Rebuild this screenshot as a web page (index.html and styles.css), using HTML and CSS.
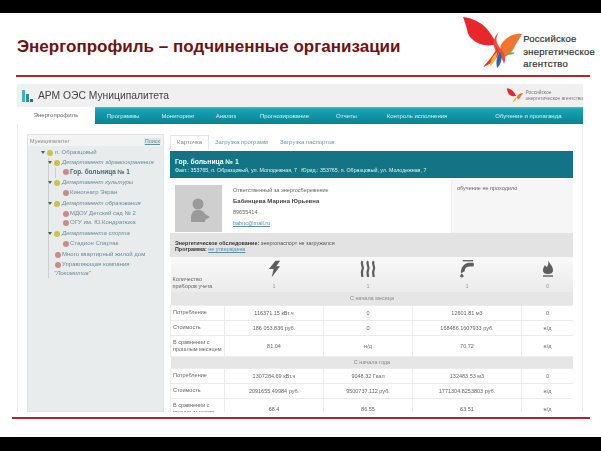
FILE: index.html
```html
<!DOCTYPE html>
<html lang="ru">
<head>
<meta charset="utf-8">
<title>Энергопрофиль</title>
<link rel="stylesheet" href="styles.css">
</head>
<body>
<div class="bar-top"></div>
<main class="slide">
  <header class="slide-head">
    <h1 class="slide-title">Энергопрофиль – подчиненные организации</h1>
    <div class="brand">
      <svg class="brand-mark" viewBox="0 0 60 54" width="60" height="54">
        <path d="M0 1C9 2 18 6 24 13C28 18 31 23 34 28C26 31 15 29 9 23C3 17 5 14 3 10C2 6 1 4 0 1Z" fill="#e8262c"/>
        <path d="M59 18C51 17 45 20 39 27C36 31 37 37 41 41C45 40 50 35 52 30C54 26 57 22 59 18Z" fill="#f0752e"/>
        <path d="M36 16C30 21 29 29 33 35C36 39 40 43 41 48C44 41 41 36 37 32C33 27 32 21 36 16Z" fill="#e94e3b"/>
        <path d="M34 31C32 38 26 44 20 51C26 49 31 45 34 41C36 38 36 34 34 31Z" fill="#e5352f"/>
        <path d="M37 36C33 41 33 46 34 52C38 48 40 42 37 36Z" fill="#2f5fb0"/>
        <path d="M34 36C29 41 27 45 27 50C31 47 34 42 34 36Z" fill="#f4b325"/>
        <path d="M43 38C46 36 49 36 52 37C49 39 46 39 43 38Z" fill="#58b947"/>
      </svg>
      <p class="brand-name">Российское<br>энергетическое<br>агентство</p>
    </div>
  </header>

  <section class="shot">
    <div class="app-head">
      <div class="app-name">
        <svg class="app-icon" viewBox="0 0 12 12" width="12" height="12">
          <rect x="0" y="0" width="3" height="12" fill="#3fb2c4"/>
          <rect x="4" y="4" width="3" height="8" fill="#2a8fa6"/>
          <rect x="8" y="9" width="3" height="3" fill="#1f6f88"/>
        </svg>
        <span>АРМ ОЭС Муниципалитета</span>
      </div>
      <div class="app-brand">
        <svg viewBox="0 0 60 54" width="18" height="15">
          <path d="M0 1C9 2 18 6 24 13C28 18 31 23 34 28C26 31 15 29 9 23C3 17 3 8 0 1Z" fill="#e8262c"/>
          <path d="M59 18C51 17 45 20 39 27C36 31 37 37 41 41C45 40 52 30 59 18Z" fill="#f0752e"/>
          <path d="M34 31C32 38 26 44 20 51C30 48 38 40 34 31Z" fill="#e9a02a"/>
        </svg>
        <span>Российское<br>энергетическое агентство</span>
      </div>
    </div>

    <nav class="nav">
      <a class="nav-active">Энергопрофиль</a>
      <a class="nav-1">Программы</a>
      <a class="nav-2">Мониторинг</a>
      <a class="nav-3">Анализ</a>
      <a class="nav-4">Прогнозирование</a>
      <a class="nav-5">Отчеты</a>
      <a class="nav-6">Контроль исполнения</a>
      <a class="nav-7">Обучение и пропаганда</a>
    </nav>

    <div class="work">
      <aside class="side">
        <div class="side-head"><span>Муниципалитет</span><a>Поиск</a></div>
        <ul class="tree">
          <li class="t0 folder">п. Образцовый</li>
          <li class="t1 folder">Департамент здравоохранения</li>
          <li class="t2 org strong">Гор. больница № 1</li>
          <li class="t1 folder gap">Департамент культуры</li>
          <li class="t2 org">Кинотеатр Экран</li>
          <li class="t1 folder gap">Департамент образования</li>
          <li class="t2 org">МДОУ Детский сад № 2</li>
          <li class="t2 org">ОГУ им. Ю.Кондратюка</li>
          <li class="t1 folder gap">Департамента спорта</li>
          <li class="t2 org">Стадион Спартак</li>
          <li class="t1 org gap">Много квартирный жилой дом</li>
          <li class="t1 org">Управляющая компания</li>
          <li class="t3">"Локомотив"</li>
        </ul>
      </aside>

      <div class="content">
        <div class="tabs">
          <a class="tab tab-on">Карточка</a>
          <a class="tab">Загрузка программ</a>
          <a class="tab">Загрузка паспортов</a>
        </div>
        <div class="org-bar">
          <strong>Гор. больница № 1</strong>
          <span>Факт.: 353765, п. Образцовый, ул. Молодежная, 7 &nbsp; Юрид.: 353765, п. Образцовый, ул. Молодежная, 7</span>
        </div>
        <div class="card">
          <div class="photo">
            <svg viewBox="0 0 47 47" width="47" height="47">
              <circle cx="23" cy="19" r="5.5" fill="#9a9a9a"/>
              <path d="M16 34C16 28 18 25 23 25C27 25 29 27 30 29L35 32L30 35L30 37L16 37Z" fill="#9a9a9a"/>
            </svg>
          </div>
          <div class="person">
            <p>Ответственный за энергосбережение</p>
            <p class="person-name">Бабинцева Марина Юрьевна</p>
            <p>89655414</p>
            <p><a>babnc@mail.ru</a></p>
          </div>
          <div class="training">обучение не проходило</div>
        </div>
        <div class="audit">
          <p><b>Энергетическое обследование:</b> энергопаспорт не загружался</p>
          <p><b>Программа:</b> <a>не утверждена</a></p>
        </div>
        <div class="table-clip">
          <table class="meters">
            <colgroup><col class="c1"><col class="c2"><col class="c3"><col class="c4"><col class="c5"></colgroup>
            <tr class="meter-head">
              <td class="left"><span>Количество<br>приборов учета</span></td>
              <td>
                <svg viewBox="0 0 14 18" width="13" height="18"><path d="M8 0L13 0L9 6L13 6L4 18L6 9L1 9Z" fill="#5e5e5e"/></svg>
                <span>1</span>
              </td>
              <td>
                <svg viewBox="0 0 16 16" width="18" height="18" fill="none" stroke="#5e5e5e" stroke-width="2"><path d="M3 1C1 4 5 6 3 9C2 11 3 13 3 15M8 1C6 4 10 6 8 9C7 11 8 13 8 15M13 1C11 4 15 6 13 9C12 11 13 13 13 15"/></svg>
                <span>1</span>
              </td>
              <td>
                <svg viewBox="0 0 18 20" width="17" height="19"><path d="M4 1H15V2.500H4Z" fill="#6a6a6a"/><path d="M2 15C2 9 5 5 10 4H15C16 4 16 8 15 8H11C8 8 6 10 6 13Z" fill="#5e5e5e"/><path d="M3 15L5 18C5 20 1 20 1 18Z" fill="#5e5e5e"/></svg>
                <span>1</span>
              </td>
              <td>
                <svg viewBox="0 0 12 18" width="12" height="18"><path d="M6 0C7 3 11 6 11 10C11 13 9 14 6 14C3 14 1 13 1 10C1 8 2 7 3 5C4 6 4 7 5 7C6 5 7 3 6 0Z" fill="#5e5e5e"/><rect x="1" y="15" width="10" height="2" fill="#8a8a8a"/></svg>
                <span>0</span>
              </td>
            </tr>
            <tr class="band"><td colspan="5">С начала месяца</td></tr>
            <tr class="r-15"><td class="left">Потребление</td><td>116371.15 кВт.ч</td><td>0</td><td>12601.81 м3</td><td>0</td></tr>
            <tr class="r-15"><td class="left">Стоимость</td><td>186 053.836 руб.</td><td>0</td><td>168486.1607933 руб.</td><td>н/д</td></tr>
            <tr class="r-21"><td class="left">В сравнении с<br>прошлым месяцем</td><td>81.04</td><td>н/д</td><td>70.72</td><td>н/д</td></tr>
            <tr class="band band-2"><td colspan="5">С начала года</td></tr>
            <tr class="r-15"><td class="left">Потребление</td><td>1307284.69 кВт.ч</td><td>9048.32 Гкал</td><td>132483.53 м3</td><td>0</td></tr>
            <tr class="r-15"><td class="left">Стоимость</td><td>2091655.49984 руб.</td><td>9500737.112 руб.</td><td>1771304.8253803 руб.</td><td>н/д</td></tr>
            <tr class="r-21"><td class="left">В сравнении с<br>прошлым годом</td><td>68.4</td><td>86.55</td><td>63.51</td><td>н/д</td></tr>
          </table>
        </div>
      </div>
    </div>
  </section>

  <div class="rule-bottom"></div>
</main>
<div class="bar-bottom"></div>
</body>
</html>
```

FILE: styles.css
```css
* { box-sizing: border-box; }
html, body { margin: 0; padding: 0; }
body {
  width: 601px;
  height: 451px;
  overflow: hidden;
  background: #fff;
  font-family: "Liberation Sans", Arial, sans-serif;
}
p, h1, ul { margin: 0; padding: 0; }
.bar-top { height: 13px; background: #000; }
.bar-bottom { height: 14px; background: #000; }
.slide { height: 424px; background: #fff; display: flex; flex-direction: column; }

.slide-head {
  height: 64px;
  margin: 0 11px 0 16px;
  border-bottom: 2px solid #b02a2c;
  display: flex;
  justify-content: space-between;
  align-items: flex-start;
}
.slide-title {
  margin: 24px 0 0 1px;
  font-size: 17px;
  line-height: 20px;
  font-weight: 700;
  color: #701214;
  white-space: nowrap;
}
.brand { display: flex; align-items: flex-start; margin: 3px -5px 0 0; }
.brand-mark { display: block; }
.brand-name {
  margin: 17px 0 0 0;
  font-size: 9.5px;
  line-height: 12.5px;
  color: #333;
  font-weight: 400;
  letter-spacing: .25px;
  -webkit-text-stroke: .2px #333;
  white-space: nowrap;
}

.shot {
  width: 566px;
  height: 328px;
  margin: 7px 0 0 17px;
  background: #fff;
  overflow: hidden;
  display: flex;
  flex-direction: column;
  filter: blur(.45px);
}
.app-head {
  height: 23px;
  flex: none;
  background: #f0f0f0;
  display: flex;
  justify-content: space-between;
  align-items: center;
  padding: 0 0 0 5px;
}
.app-name { display: flex; align-items: center; gap: 4px; font-size: 10.3px; color: #444; }
.app-icon { display: block; }
.app-brand { display: flex; align-items: center; gap: 2px; font-size: 4.8px; line-height: 6px; color: #777; }
.app-brand svg { display: block; }
.app-brand span { white-space: nowrap; }

.nav {
  height: 17px;
  flex: none;
  background: linear-gradient(#2fc3d0 0, #16a3b5 15%, #0b8194 100%);
  display: flex;
  align-items: center;
  font-size: 6px;
  color: #d8f2f5;
  white-space: nowrap;
}
.nav-active {
  width: 78px;
  height: 17px;
  background: #fff;
  color: #666;
  text-align: center;
  line-height: 17px;
}
.nav-1 { margin-left: 12px; }
.nav-2 { margin-left: 22px; }
.nav-3 { margin-left: 21px; }
.nav-4 { margin-left: 24px; }
.nav-5 { margin-left: 27px; }
.nav-6 { margin-left: 30px; }
.nav-7 { margin-left: 48px; }

.work {
  flex: 1;
  display: flex;
  align-items: flex-start;
  min-height: 0;
  padding: 10px 9px 0 9px;
  border-left: 1px solid #eee;
  border-right: 1px solid #eee;
}
.side {
  width: 137px;
  height: 278px;
  flex: none;
  background: #e9ecec;
  border: 1px solid #e2e4e4;
}
.side-head {
  height: 11px;
  background: #f2f3f3;
  display: flex;
  justify-content: space-between;
  align-items: center;
  padding: 0 2px;
  font-size: 5.5px;
  color: #888;
}
.side-head a { color: #5f8fa0; background: #dfe9ea; padding: 0 1px; text-decoration: underline; }
.tree {
  list-style: none;
  padding-top: 2px;
  font-size: 6px;
  line-height: 9.6px;
  color: #6a8a96;
  white-space: nowrap;
  background:
    linear-gradient(#c9d0d0, #c9d0d0) 20px 12px / 1px 120px no-repeat,
    linear-gradient(#c9d0d0, #c9d0d0) 27px 22px / 1px 10px no-repeat;
}
.tree li { position: relative; }
.tree .gap { margin-top: 1.500px; }
.t0 { padding-left: 27px; }
.t1 { padding-left: 34px; font-style: italic; }
.t2 { padding-left: 42px; }
.t3 { padding-left: 26px; font-style: italic; }
.tree .strong { font-weight: 700; color: #4b6874; font-size: 6.4px; }
.tree .org.t1 { font-style: normal; }
.folder::before, .org::before {
  content: "";
  position: absolute;
  width: 6px;
  height: 6px;
  top: 2px;
  border-radius: 50%;
}
.folder::before { background: #c9c445; margin-left: -8px; }
.org::before { background: #c98a8d; margin-left: -7px; }
.folder::after {
  content: "";
  position: absolute;
  left: 0;
  top: 3px;
  border: 2px solid transparent;
  border-top: 3px solid #555;
  border-bottom: 0;
}
.t0.folder::after { left: 13px; }
.t1.folder::after { left: 20px; }

.content { width: 403px; margin-left: 6px; flex: none; }
.tabs { display: flex; height: 17px; align-items: flex-start; font-size: 6px; color: #6d9aa8; }
.tab { height: 14px; line-height: 14px; margin-top: 1px; padding: 0 6px; white-space: nowrap; }
.tab-on { width: 39px; padding: 0; text-align: center; background: #fff; border: 1px solid #e5e5e5; border-bottom: 0; color: #888; line-height: 13px; }
.org-bar {
  height: 27px;
  background: #137486;
  color: #e6f3f5;
  padding: 6px 5px 0;
  display: flex;
  flex-direction: column;
  white-space: nowrap;
  font-size: 5.3px;
  line-height: 9px;
}
.org-bar strong { font-size: 6.8px; line-height: 9px; color: #fff; }
.card { height: 55px; display: flex; padding: 2px 0 0; }
.photo { width: 47px; height: 47px; margin: 5px 0 0 5px; background: #cfcfcf; flex: none; }
.photo svg { display: block; }
.person { width: 229px; padding: 5px 0 0 11px; font-size: 5.5px; color: #666; flex: none; }
.person p { height: 11px; line-height: 11px; white-space: nowrap; }
.person .person-name { font-weight: 700; font-size: 6px; color: #444; }
.person a { color: #5a93a8; text-decoration: underline; }
.training { width: 122px; background: #f6f6f6; padding: 5px 0 0 5px; font-size: 5.5px; color: #666; border-left: 1px solid #eee; }
.audit { height: 24px; background: #e3e3e3; padding: 7px 5px 0; font-size: 5.4px; line-height: 6px; color: #555; }
.audit b { color: #333; }
.audit a { color: #5a93a8; text-decoration: underline; }

.table-clip { height: 155px; overflow: hidden; }
.meters { width: 403px; table-layout: fixed; border-collapse: collapse; font-size: 5.5px; color: #666; text-align: center; }
.c1 { width: 54px; } .c2 { width: 99px; } .c3 { width: 89px; } .c4 { width: 109px; } .c5 { width: 52px; }
.meters td { padding: 0; border: 1px solid #ececec; }
.meters .left { text-align: left; padding-left: 2px; line-height: 6.500px; }
.meter-head td { height: 35px; border: 0; background: linear-gradient(#f9f9f9, #ebebeb); vertical-align: bottom; padding-bottom: 3px; color: #999; }
.meter-head td.left { color: #666; }
.meter-head svg { display: block; margin: 0 auto 5px; }
.meter-head span { display: block; }
.band td { height: 13px; background: #e6e6e6; border: 0; color: #888; }
.band-2 td { height: 12px; }
.r-15 td { height: 15px; }
.r-21 td { height: 21px; }

.rule-bottom {
  height: 2px;
  margin: 5px 11px 0 12px;
  background: #a82a2e;
  flex: none;
}
```
